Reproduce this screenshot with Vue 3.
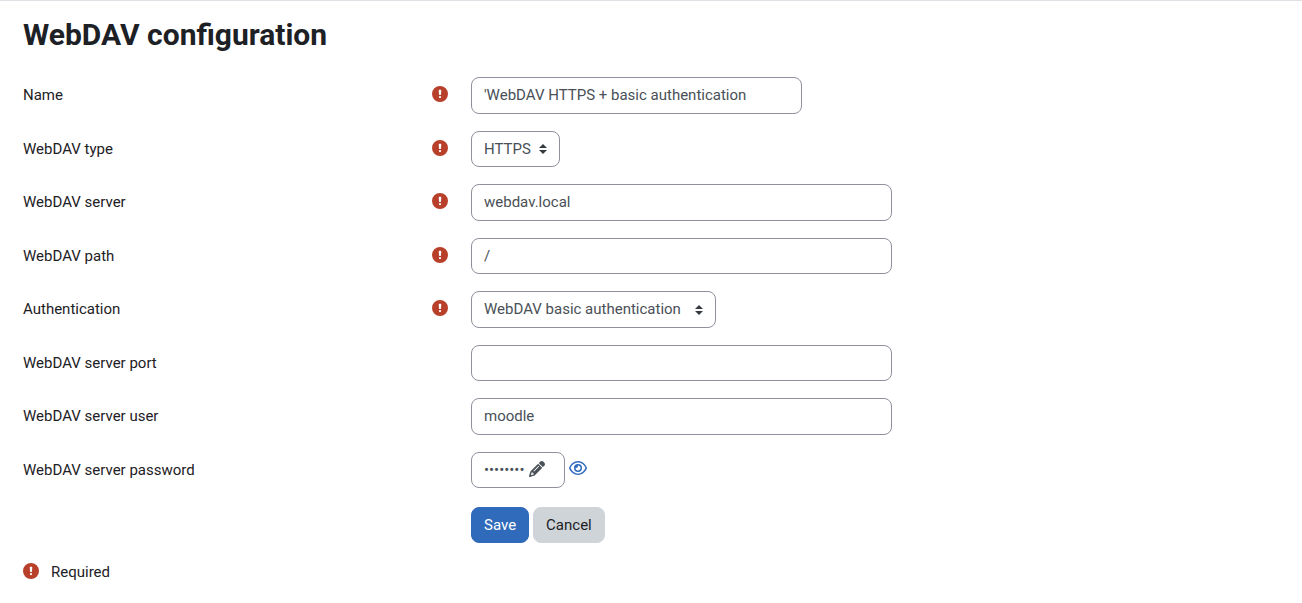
<script setup>
import { ref } from 'vue'

const requiredIcon = 'M256 512A256 256 0 1 0 256 0a256 256 0 1 0 0 512zM232 120h48c10 0 17 8 16 18l-8 132c-1 9-7 14-15 14h-34c-8 0-14-5-15-14l-8-132c-1-10 6-18 16-18zM220 352a36 36 0 1 1 72 0 36 36 0 1 1-72 0z'

const fields = ref([
  { id: 'name', label: 'Name', kind: 'text', value: "'WebDAV HTTPS + basic authentication", required: true, size: 'medium' },
  { id: 'type', label: 'WebDAV type', kind: 'select', value: 'HTTPS', options: ['HTTP', 'HTTPS'], required: true, size: 'short' },
  { id: 'server', label: 'WebDAV server', kind: 'text', value: 'webdav.local', required: true, size: 'long' },
  { id: 'path', label: 'WebDAV path', kind: 'text', value: '/', required: true, size: 'long' },
  { id: 'auth', label: 'Authentication', kind: 'select', value: 'WebDAV basic authentication', options: ['None', 'WebDAV basic authentication'], required: true, size: 'auth' },
  { id: 'port', label: 'WebDAV server port', kind: 'text', value: '', required: false, size: 'long' },
  { id: 'user', label: 'WebDAV server user', kind: 'text', value: 'moodle', required: false, size: 'long' },
  { id: 'password', label: 'WebDAV server password', kind: 'password', required: false }
])
</script>

<template>
  <main class="page">
    <h1>WebDAV configuration</h1>
    <form @submit.prevent>
      <div class="fields">
        <div v-for="f in fields" :key="f.id" class="row">
          <div class="caption">
            <label :for="f.id">{{ f.label }}</label>
            <svg v-if="f.required" class="required" viewBox="0 0 512 512" role="img" aria-label="Required">
              <path fill-rule="evenodd" :d="requiredIcon" />
            </svg>
          </div>
          <div class="control">
            <input v-if="f.kind === 'text'" :id="f.id" v-model="f.value" type="text" class="box" :class="f.size">
            <select v-else-if="f.kind === 'select'" :id="f.id" v-model="f.value" class="box" :class="f.size">
              <option v-for="o in f.options" :key="o">{{ o }}</option>
            </select>
            <template v-else>
              <button :id="f.id" type="button" class="box secret">
                <span>••••••••</span>
                <svg class="pen" viewBox="0 0 512 512" aria-hidden="true">
                  <path d="M410.300 231l11.300-11.300-33.900-33.900-62.100-62.100L291.700 89.800l-11.300 11.300-22.600 22.600L58.600 322.900c-10.400 10.400-18 23.300-22.200 37.400L1 480.700c-2.500 8.400-.2 17.500 6.100 23.700s15.300 8.500 23.700 6.100l120.300-35.400c14.100-4.200 27-11.800 37.400-22.200L387.700 253.700 410.300 231zM160 399.400l-9.100 22.700c-4 3.100-8.500 5.400-13.300 6.900L59.400 452l23-78.100c1.400-4.900 3.800-9.400 6.900-13.300l22.700-9.100v32c0 8.800 7.200 16 16 16h32zM362.700 18.700L348.300 33.200 325.700 55.800 314.300 67.100l33.900 33.900 62.100 62.100 33.900 33.900 11.300-11.300 22.600-22.600 14.500-14.500c25-25 25-65.500 0-90.500L453.300 18.700c-25-25-65.500-25-90.500 0zm-47.400 168l-144 144c-6.200 6.200-16.400 6.200-22.600 0s-6.200-16.400 0-22.600l144-144c6.200-6.200 16.400-6.200 22.600 0s6.200 16.400 0 22.600z" />
                </svg>
              </button>
              <button type="button" class="reveal" aria-label="Reveal">
                <svg viewBox="0 0 576 512" aria-hidden="true">
                  <path d="M288 80c-65.200 0-118.800 29.600-159.900 67.700C89.600 183.500 63 226 49.400 256c13.600 30 40.200 72.500 78.600 108.300C169.200 402.400 222.800 432 288 432s118.800-29.600 159.900-67.700C486.400 328.500 513 286 526.600 256c-13.600-30-40.200-72.500-78.600-108.300C406.800 109.600 353.200 80 288 80zM95.400 112.600C142.500 68.800 207.200 32 288 32s145.500 36.800 192.600 80.600c46.800 43.500 78.100 95.400 93 131.100c3.300 7.900 3.300 16.700 0 24.600c-14.900 35.700-46.200 87.700-93 131.100C433.500 443.200 368.800 480 288 480s-145.500-36.800-192.600-80.600C48.600 356 17.300 304 2.500 268.300c-3.300-7.900-3.300-16.700 0-24.600C17.300 208 48.600 156 95.400 112.600zM288 336c44.200 0 80-35.800 80-80s-35.800-80-80-80c-.7 0-1.300 0-2 0c1.300 5.100 2 10.500 2 16c0 35.300-28.700 64-64 64c-5.500 0-10.900-.7-16-2c0 .7 0 1.300 0 2c0 44.200 35.800 80 80 80zm0-208a128 128 0 1 1 0 256 128 128 0 1 1 0-256z" />
                </svg>
              </button>
            </template>
          </div>
        </div>
      </div>
      <div class="row actions">
        <div class="buttons">
          <button type="submit" class="btn primary">Save</button>
          <button type="button" class="btn secondary">Cancel</button>
        </div>
      </div>
    </form>
    <div class="legend">
      <svg class="required" viewBox="0 0 512 512" aria-hidden="true">
        <path fill-rule="evenodd" :d="requiredIcon" />
      </svg>
      <span>Required</span>
    </div>
  </main>
</template>

<style>
body { background: #fff; }
</style>

<style scoped>
.page {
  border-top: 1px solid #dee2e6;
  padding: 16px 23px;
  font: 15px/22px Roboto, "Liberation Sans", sans-serif;
  color: #1d2125;
}
h1 { margin: 0 0 24px; font-size: 30px; line-height: 36px; font-weight: 700; }
.fields { display: grid; grid-auto-rows: 37px 36px; row-gap: 17px; }
.row { display: grid; grid-template-columns: 425px minmax(0, 1fr); column-gap: 23px; }
.caption { display: flex; justify-content: space-between; align-items: flex-start; padding-top: 7px; }
.required { width: 16px; height: 16px; margin-top: 2px; fill: #b8402a; }
.control { display: flex; align-items: stretch; gap: 4px; }
.box, .btn {
  box-sizing: border-box;
  margin: 0;
  padding: 6px 12px;
  border: 1px solid #8f919e;
  border-radius: 8px;
  font: inherit;
  color: #495057;
  background: #fff;
}
.medium { width: 331px; }
.long { width: 421px; }
.short { width: 89px; }
.auth { width: 245px; }
select.box {
  appearance: none;
  padding-right: 24px;
  background: #fff url("data:image/svg+xml,%3Csvg xmlns='http://www.w3.org/2000/svg' viewBox='0 0 4 5'%3E%3Cpath fill='%23343a40' d='M2 0L0 2h4zm0 5L0 3h4z'/%3E%3C/svg%3E") no-repeat right 12px center / 8px 10px;
}
.row:nth-child(odd) .box { padding-bottom: 7px; }
.secret { display: flex; align-items: flex-start; gap: 4px; width: 94px; }
.pen { width: 16px; height: 16px; margin-top: 2px; fill: #495057; }
.reveal { display: flex; align-items: flex-start; padding: 8px 0; border: 0; background: none; }
.reveal svg { width: 18px; height: 16px; fill: #306cbf; }
.actions { margin-top: 19px; }
.buttons { grid-column: 2; display: flex; gap: 4px; }
.primary { color: #fff; background: #306aba; border-color: #306aba; }
.secondary { color: #1d2125; background: #ced4d8; border-color: #ced4d8; }
.legend { display: flex; align-items: flex-start; gap: 12px; margin-top: 18px; }
</style>
